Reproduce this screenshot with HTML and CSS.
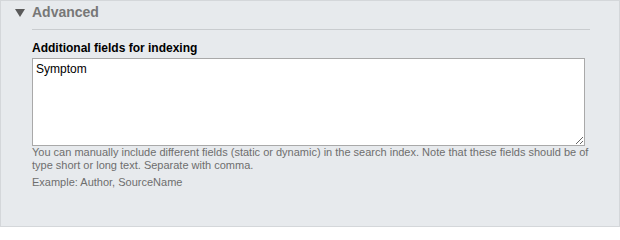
FILE: index.html
```html
<!DOCTYPE html>
<html>
<head>
<meta charset="utf-8">
<link rel="stylesheet" href="styles.css">
</head>
<body>
<div class="panel">
  <div class="header">
    <span class="caret"></span>
    <span class="title">Advanced</span>
  </div>
  <div class="body">
    <div class="rule"></div>
    <label class="label" for="fields">Additional fields for indexing</label>
    <textarea id="fields" class="field">Symptom</textarea>
    <p class="help">You can manually include different fields (static or dynamic) in the search index. Note that these fields should be of type short or long text. Separate with comma.</p>
    <p class="example">Example: Author, SourceName</p>
  </div>
</div>
</body>
</html>
```
FILE: styles.css
```css
html, body {
  margin: 0;
  padding: 0;
}
body {
  font-family: "Liberation Sans", Arial, sans-serif;
  background: #ffffff;
}
.panel {
  box-sizing: border-box;
  width: 620px;
  height: 227px;
  background: #e7eaed;
  border: 1px solid #d4d7da;
}
.header {
  display: flex;
  align-items: center;
  height: 16px;
  padding: 3px 0 0 14px;
}
.caret {
  width: 0;
  height: 0;
  border-left: 5px solid transparent;
  border-right: 5px solid transparent;
  border-top: 8px solid #5a5a5a;
  margin-right: 7px;
  margin-top: 1px;
}
.title {
  font-size: 14px;
  line-height: 16px;
  font-weight: bold;
  color: #777777;
}
.body {
  margin: 0 29px 0 31px;
  padding-top: 9px;
}
.rule {
  height: 0;
  border-top: 1px solid #c9cccf;
}
.label {
  display: block;
  margin-top: 11px;
  font-size: 12px;
  line-height: 14px;
  font-weight: bold;
  color: #000000;
}
.field {
  display: block;
  box-sizing: border-box;
  width: 553px;
  height: 88px;
  margin: 3px 0 0 0;
  padding: 3px 3px;
  border: 1px solid #a9a9a9;
  border-radius: 0;
  background: #ffffff;
  font-family: "Liberation Sans", Arial, sans-serif;
  font-size: 12px;
  line-height: 14px;
  color: #000000;
  resize: both;
  outline: none;
}
.help {
  margin: 0;
  width: 568px;
  font-size: 11px;
  line-height: 13px;
  color: #6e6e6e;
}
.example {
  margin: 4px 0 0 0;
  font-size: 11px;
  line-height: 13px;
  color: #6e6e6e;
}
```
